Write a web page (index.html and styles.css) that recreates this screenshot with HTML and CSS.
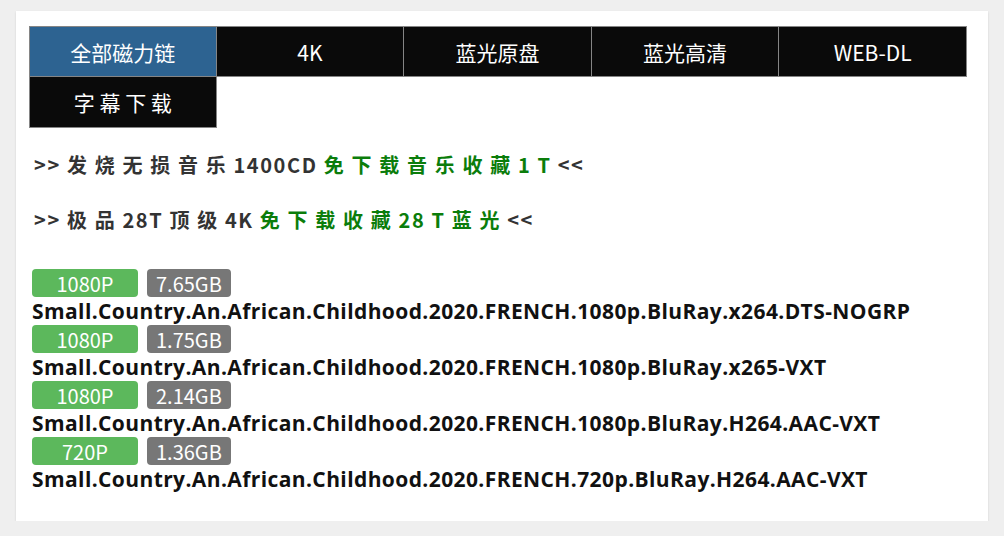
FILE: index.html
```html
<!DOCTYPE html>
<html lang="zh-CN">
<head>
<meta charset="utf-8">
<title>磁力链</title>
<link rel="stylesheet" href="styles.css">
</head>
<body>
<div class="card">
  <div class="tabs">
    <a class="tab active">全部磁力链</a>
    <a class="tab">4K</a>
    <a class="tab">蓝光原盘</a>
    <a class="tab">蓝光高清</a>
    <a class="tab">WEB-DL</a>
    <a class="tab spaced">字 幕 下 载</a>
  </div>
  <p class="promo promo-first">&gt;&gt; 发 烧 无 损 音 乐 1400CD <span class="green">免 下 载 音 乐 收 藏 1 T</span> &lt;&lt;</p>
  <p class="promo">&gt;&gt; 极 品 28T 顶 级 4K <span class="green">免 下 载 收 藏 28 T 蓝 光</span> &lt;&lt;</p>
  <ul class="list">
    <li class="item">
      <div class="badges"><span class="badge res">1080P</span><span class="badge size">7.65GB</span></div>
      <div class="name">Small.Country.An.African.Childhood.2020.FRENCH.1080p.BluRay.x264.DTS-NOGRP</div>
    </li>
    <li class="item">
      <div class="badges"><span class="badge res">1080P</span><span class="badge size">1.75GB</span></div>
      <div class="name">Small.Country.An.African.Childhood.2020.FRENCH.1080p.BluRay.x265-VXT</div>
    </li>
    <li class="item">
      <div class="badges"><span class="badge res">1080P</span><span class="badge size">2.14GB</span></div>
      <div class="name">Small.Country.An.African.Childhood.2020.FRENCH.1080p.BluRay.H264.AAC-VXT</div>
    </li>
    <li class="item">
      <div class="badges"><span class="badge res">720P</span><span class="badge size">1.36GB</span></div>
      <div class="name">Small.Country.An.African.Childhood.2020.FRENCH.720p.BluRay.H264.AAC-VXT</div>
    </li>
  </ul>
</div>
</body>
</html>
```
FILE: styles.css
```css
html, body {
  margin: 0;
  padding: 0;
}
body {
  background: #efefef;
  padding: 11px 16px 0 16px;
  font-family: "Noto Sans CJK SC", "Noto Sans", sans-serif;
}
.card {
  background: #ffffff;
  padding: 15px 21px 28px 13px;
  box-shadow: 0 1px 2px rgba(0,0,0,0.12);
  height: 467px;
}
.tabs {
  display: grid;
  grid-template-columns: repeat(5, 1fr);
  grid-auto-rows: 51px;
}
.tab {
  display: flex;
  align-items: center;
  justify-content: center;
  background: #0a0a0a;
  color: #ffffff;
  font-size: 21px;
  border-right: 1px solid #858585;
  border-bottom: 1px solid #858585;
  cursor: pointer;
}
.tab:nth-child(-n+5) {
  border-top: 1px solid #858585;
}
.tab:nth-child(5n+1) {
  border-left: 1px solid #858585;
}
.tab.active {
  background: #2d6391;
}
.promo {
  margin: 0 0 27px 5px;
  font-size: 20px;
  line-height: 28px;
  font-weight: bold;
  color: #333333;
  letter-spacing: 1.6px;
}
.promo-first {
  margin-top: 23px;
}
.green {
  color: #0b7d0b;
}
.list {
  list-style: none;
  margin: 35px 0 0 3px;
  padding: 0;
}
.item {
  margin: 0;
}
.badges {
  display: flex;
  gap: 9px;
  height: 28px;
}
.badge {
  display: flex;
  align-items: center;
  justify-content: center;
  height: 28px;
  border-radius: 4px;
  color: #ffffff;
  font-size: 20px;
}
.badge.res {
  width: 106px;
  background: #5cb85c;
}
.badge.size {
  padding: 0 9px;
  background: #777777;
}
.name {
  font-family: "Open Sans", "Noto Sans CJK SC", sans-serif;
  font-weight: bold;
  font-size: 21px;
  line-height: 28px;
  letter-spacing: 0.4px;
  color: #111111;
}
```
